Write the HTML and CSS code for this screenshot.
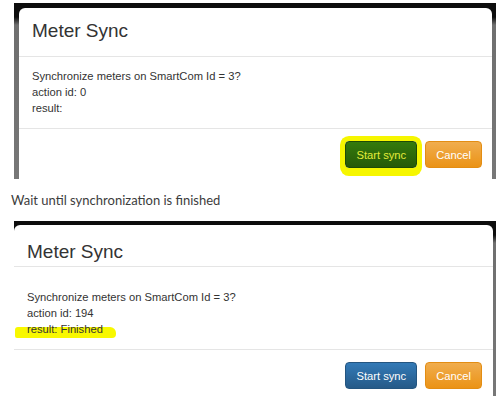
FILE: index.html
```html
<!DOCTYPE html>
<html lang="en">
<head>
<meta charset="utf-8">
<title>Meter Sync</title>
<link rel="stylesheet" href="styles.css">
</head>
<body>
<div class="frame frame-first">
  <div class="modal">
    <div class="modal-header">
      <h3 class="modal-title">Meter Sync</h3>
    </div>
    <div class="modal-body">
      <div>Synchronize meters on SmartCom Id = 3?</div>
      <div>action id: 0</div>
      <div>result:</div>
    </div>
    <div class="modal-footer">
      <button class="btn btn-primary btn-marked">Start sync</button>
      <button class="btn btn-warning">Cancel</button>
    </div>
  </div>
</div>
<p class="note">Wait until synchronization is finished</p>
<div class="frame frame-second">
  <div class="modal">
    <div class="modal-header">
      <h3 class="modal-title">Meter Sync</h3>
    </div>
    <div class="modal-body">
      <div>Synchronize meters on SmartCom Id = 3?</div>
      <div>action id: 194</div>
      <div><span class="marker">result: Finished</span></div>
    </div>
    <div class="modal-footer">
      <button class="btn btn-primary">Start sync</button>
      <button class="btn btn-warning">Cancel</button>
    </div>
  </div>
</div>
</body>
</html>
```
FILE: styles.css
```css
html, body {
  margin: 0;
  padding: 0;
}
body {
  width: 500px;
  height: 403px;
  overflow: hidden;
  background: #fff;
  color: #333;
  font-family: "Liberation Sans", Arial, sans-serif;
}
.frame {
  margin-left: 14px;
  width: 482px;
  box-sizing: border-box;
  background: linear-gradient(#0d0d0d 0, #0d0d0d 14px, #6f6f6f 22px, #777 100%);
}
.frame-first {
  margin-top: 3px;
  padding: 5px 4px 0 5px;
}
.frame-second {
  padding: 4px 3px 0 0;
}
.modal {
  background: #fff;
  border-radius: 6px 6px 0 0;
}
.modal-header {
  border-bottom: 1px solid #e5e5e5;
}
.frame-first .modal-header {
  padding: 12px 13px 14px;
}
.frame-second .modal-header {
  padding: 16px 13px 3px;
}
.modal-title {
  margin: 0;
  font-size: 19px;
  line-height: 22px;
  font-weight: normal;
  color: #333;
}
.modal-body {
  position: relative;
  z-index: 0;
  font-size: 11.2px;
  line-height: 16px;
  border-bottom: 1px solid #e5e5e5;
}
.frame-first .modal-body {
  padding: 11px 13px 12px;
}
.frame-second .modal-body {
  padding: 22px 13px 12px;
}
.modal-footer {
  display: flex;
  justify-content: flex-end;
  gap: 8px;
}
.frame-first .modal-footer {
  padding: 12px 10px 11px;
}
.frame-second .modal-footer {
  padding: 12px 11px 7px;
}
.btn {
  height: 27px;
  padding: 0 10px;
  border: 1px solid;
  border-radius: 4px;
  font-family: "Liberation Sans", Arial, sans-serif;
  font-size: 11.2px;
  color: #fff;
  cursor: pointer;
}
.btn-primary {
  background: linear-gradient(#337ab7, #265a88);
  border-color: #245580;
}
.btn-warning {
  background: linear-gradient(#f0ad4e, #eb9316);
  border-color: #e38d13;
}
.btn-marked {
  background: linear-gradient(#347a0c, #275a08);
  border-color: #1f4a06;
  color: #e4ec3a;
  box-shadow: 0 0 0 5px #f6f600, 0 3px 0 5px #f6f600;
}
.note {
  margin: 0 0 0 11px;
  height: 42px;
  line-height: 42px;
  font-family: Lato, "Open Sans", sans-serif;
  font-size: 13px;
  color: #3c3c3c;
}
.marker {
  position: relative;
}
.marker::before {
  content: "";
  position: absolute;
  left: -12px;
  right: -13px;
  top: 4px;
  bottom: -3px;
  background: #f8f800;
  border-radius: 3px 6px 4px 2px;
  z-index: -1;
}
```
